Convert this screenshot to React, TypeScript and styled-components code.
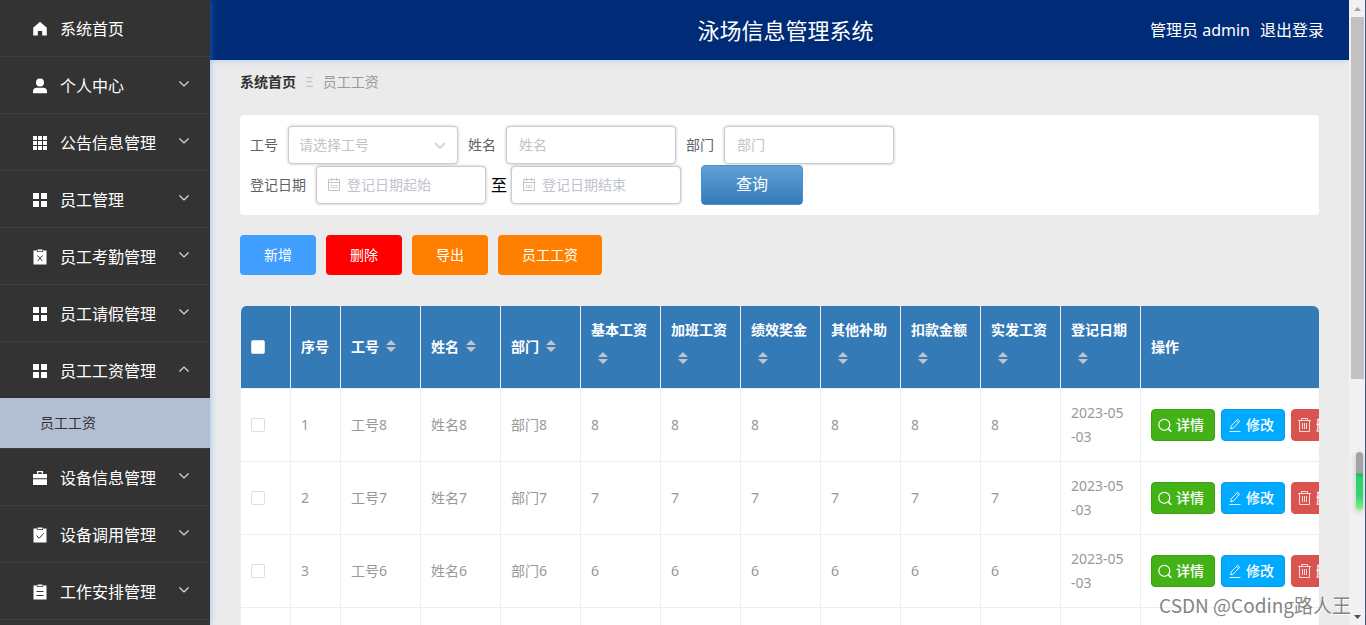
import React from "react";
import styled, { createGlobalStyle } from "styled-components";

const GlobalStyle = createGlobalStyle`
  *, *::before, *::after { box-sizing: border-box; }
  body {
    margin: 0;
    background: #ebebeb;
    color: #333;
    font-family: "Noto Sans", "Noto Sans CJK SC", sans-serif;
    font-size: 14px;
    line-height: 24px;
  }
  button, input, select { font: inherit; }
`;

const Page = styled.div`
  position: relative;
  display: grid;
  grid-template-columns: 210px minmax(0, 1fr) 17px;
  height: 100vh;
  overflow: hidden;
`;

/* ---------- Sidebar ---------- */

const Sidebar = styled.nav`
  position: relative;
  z-index: 1;
  background: #333;
  box-shadow: 1px 0 6px rgba(64, 158, 255, 0.4);
  overflow: hidden;
`;

const MenuList = styled.ul`
  list-style: none;
  margin: 0;
  padding: 0;
`;

const MenuItem = styled.li`
  border-bottom: 1px solid #3d3d3d;
`;

const MenuButton = styled.button`
  display: flex;
  align-items: center;
  gap: 12px;
  width: 100%;
  height: 56px;
  padding: 2px 20px 0 32px;
  border: 0;
  background: transparent;
  color: #fff;
  font-size: 16px;
  text-align: left;
  cursor: pointer;
`;

const MenuLabel = styled.span`
  flex: 1;
`;

const Arrow = styled.svg<{ $open?: boolean }>`
  width: 12px;
  height: 12px;
  margin-bottom: 4px;
  transform: ${(p) => (p.$open ? "rotate(180deg)" : "none")};
`;

const SubLink = styled.a`
  display: block;
  height: 50px;
  padding-left: 40px;
  background: #b3bed3;
  color: #333;
  line-height: 50px;
  text-decoration: none;
`;

/* ---------- Header ---------- */

const Column = styled.div`
  min-width: 0;
  overflow: hidden;
`;

const Header = styled.header`
  display: grid;
  grid-template-columns: 1fr auto 1fr;
  align-items: center;
  height: 60px;
  padding-left: 12px;
  background: #002b77;
  box-shadow: 0 1px 6px rgba(64, 158, 255, 0.3);
  color: #fff;
`;

const Title = styled.h1`
  grid-column: 2;
  margin: 0;
  font-size: 22px;
  font-weight: 400;
  line-height: 60px;
`;

const UserArea = styled.div`
  display: flex;
  justify-content: flex-end;
  gap: 10px;
  padding-right: 25px;
  font-size: 16px;
`;

const Logout = styled.a`
  color: inherit;
  text-decoration: none;
`;

/* ---------- Content ---------- */

const Content = styled.main`
  padding: 0 30px;
`;

const Breadcrumb = styled.nav`
  display: flex;
  gap: 9px;
  height: 45px;
  padding-top: 10px;
  border-bottom: 1px solid #eee;
  margin-bottom: 10px;
  color: #999;
`;

const CrumbHome = styled.a`
  color: #303133;
  font-weight: 700;
  text-decoration: none;
`;

const CrumbMark = styled.span`
  color: #c0c4cc;
`;

const SearchPanel = styled.form`
  padding: 10px;
  border-radius: 4px;
  background: #fff;
`;

const FieldRow = styled.div`
  display: flex;
  align-items: center;
  gap: 10px;
  height: 40px;
`;

const Field = styled.label`
  display: flex;
  align-items: center;
  gap: 10px;
  color: #606266;
`;

const Range = styled.div`
  display: flex;
  align-items: center;
  gap: 4px;
`;

const RangeWord = styled.span`
  width: 17px;
  color: #000;
  font-size: 16px;
  text-align: right;
`;

const Box = styled.span<{ $inset: number }>`
  display: flex;
  align-items: center;
  gap: 6px;
  width: 170px;
  height: 38px;
  padding: 0 10px 0 ${(p) => p.$inset}px;
  border: 1px solid #ccc;
  border-radius: 4px;
  background: #fff;
  box-shadow: 0 0 3px rgba(0, 0, 0, 0.25);
  color: #c0c4cc;
`;

const TextInput = styled.input`
  flex: 1;
  min-width: 0;
  padding: 0;
  border: 0;
  outline: 0;
  background: transparent;
  color: #606266;
  &::placeholder { color: #c0c4cc; opacity: 1; }
`;

const Select = styled.select`
  flex: 1;
  min-width: 0;
  padding: 0;
  border: 0;
  outline: 0;
  appearance: none;
  background: transparent;
  color: #c0c4cc;
`;

const SearchButton = styled.button`
  width: 102px;
  height: 40px;
  margin-left: 10px;
  padding: 0 0 2px;
  border: 1px solid #4a8ec9;
  border-radius: 4px;
  background: linear-gradient(#62a1d8, #337ab7);
  color: #fff;
  font-size: 16px;
`;

const Actions = styled.div`
  display: flex;
  gap: 10px;
  padding: 20px 0 31px;
`;

const ActionButton = styled.button<{ $color: string }>`
  height: 40px;
  padding: 0 24px;
  border: 0;
  border-radius: 4px;
  background: ${(p) => p.$color};
  color: #fff;
`;

/* ---------- Table ---------- */

const TableFrame = styled.div`
  overflow: hidden;
  border-left: 1px solid #eee;
  border-radius: 6px 6px 0 0;
  background: #fff;
`;

const Table = styled.table`
  width: 1180px;
  min-width: 100%;
  table-layout: fixed;
  border-collapse: separate;
  border-spacing: 0;
`;

const HeadCell = styled.th`
  height: 83px;
  padding: 0 10px;
  border-right: 1px solid #eee;
  border-bottom: 1px solid #eee;
  background: #337ab7;
  color: #fff;
  font-weight: 700;
  text-align: left;
  vertical-align: middle;
`;

const HeadContent = styled.div`
  display: flex;
  flex-wrap: wrap;
  align-items: center;
`;

const SortButton = styled.button`
  display: flex;
  align-items: center;
  justify-content: center;
  width: 24px;
  height: 34px;
  padding: 0 0 2px;
  border: 0;
  background: transparent;
`;

const Cell = styled.td`
  height: 73px;
  padding: 0 10px;
  border-right: 1px solid #eee;
  border-bottom: 1px solid #eee;
  color: #999;
  vertical-align: middle;
`;

const Check = styled.input`
  display: block;
  width: 14px;
  height: 14px;
  margin: 0;
  appearance: none;
  border: 1px solid #dcdfe6;
  border-radius: 2px;
  background: #fff;
`;

const RowActions = styled.div`
  display: flex;
  gap: 6px;
`;

const RowButton = styled.button<{ $color: string; $edge: string }>`
  display: flex;
  flex: none;
  align-items: center;
  gap: 4px;
  width: 64px;
  height: 32px;
  padding: 0 0 0 6px;
  border: 1px solid ${(p) => p.$edge};
  border-radius: 4px;
  background: ${(p) => p.$color};
  color: #fff;
  font-weight: 500;
  white-space: nowrap;
`;

/* ---------- Scrollbar and overlays ---------- */

const ScrollTrack = styled.div`
  display: flex;
  flex-direction: column;
  align-items: center;
  border-right: 1px solid #3b5b8c;
  background: #f1f1f1;
`;

const ScrollArrow = styled.svg`
  flex: none;
  width: 17px;
  height: 17px;
`;

const ScrollLane = styled.div`
  flex: 1;
  width: 13px;
`;

const ScrollThumb = styled.div`
  height: 362px;
  background: #c1c1c1;
`;

const Gauge = styled.div`
  position: absolute;
  z-index: 2;
  right: 3px;
  top: 452px;
  width: 7px;
  height: 58px;
  border-radius: 4px;
  background: linear-gradient(#a3a3a3 0 21px, #14b85c 22px, #2bd06f 26px, #35d473 44px, #82f58a 58px);
  box-shadow: 0 2px 6px rgba(0, 0, 0, 0.2);
`;

const Watermark = styled.div`
  position: absolute;
  z-index: 2;
  right: 15px;
  bottom: 6px;
  color: #858585;
  font-family: "Noto Sans CJK SC", sans-serif;
  font-size: 19px;
  font-weight: 400;
  line-height: 28px;
  text-shadow: 1px 1px 0 #fff;
  white-space: nowrap;
`;

/* ---------- Icons ---------- */

const Glyph = styled.svg<{ $size: number }>`
  flex: none;
  display: block;
  width: ${(p) => p.$size}px;
  height: ${(p) => p.$size}px;
`;

const menuShapes: Record<string, React.ReactNode> = {
  home: <path d="M8 .8 1.2 6.8V14.4H5.8V10H10.2V14.4H14.8V6.8Z" />,
  user: (
    <>
      <circle cx="8" cy="4.6" r="4" />
      <path d="M1 15.3v-2.2C1 11 2.500 9.700 4.500 9.700h7c2 0 3.500 1.300 3.500 3.400v2.200z" />
    </>
  ),
  grid9: (
    <path d="M1 1h4v4H1zM6 1h4v4H6zM11 1h4v4h-4zM1 6h4v4H1zM6 6h4v4H6zM11 6h4v4h-4zM1 11h4v4H1zM6 11h4v4H6zM11 11h4v4h-4z" />
  ),
  grid4: <path d="M1 1h6v6H1zM9 1h6v6H9zM1 9h6v6H1zM9 9h6v6H9z" />,
  clipX: (
    <>
      <path d="M1.500 1.500h3.500v1.500h6V1.500h3.500v14h-13zM5.500.5h5V2.200h-5z" />
      <path d="m5.500 6.500 5 5.500m0-5.500-5 5.500" stroke="#333" fill="none" />
    </>
  ),
  clipCheck: (
    <>
      <path d="M1.500 1.500h3.500v1.500h6V1.500h3.500v14h-13zM5.500.5h5V2.200h-5z" />
      <path d="m4.500 8.500 2.700 2.800 4.500-5" stroke="#333" fill="none" />
    </>
  ),
  clipList: (
    <>
      <path d="M1.500 1.500h3.500v1.500h6V1.500h3.500v14h-13zM5.500.5h5V2.200h-5z" />
      <path d="M4.500 7.500h7m-7 4h7" stroke="#333" fill="none" />
    </>
  ),
  briefcase: (
    <path d="M5 1h6v3h4v4.200H1V4h4zM6.200 2.200V4h3.600V2.200zM1 9.200h14V15H1z" fillRule="evenodd" />
  ),
};

const MenuIcon = ({ name }: { name: string }) => (
  <Glyph $size={16} viewBox="0 0 16 16" fill="#fff" aria-hidden="true">
    {menuShapes[name]}
  </Glyph>
);

const CalendarIcon = () => (
  <Glyph $size={14} viewBox="0 0 14 14" fill="none" stroke="#c0c4cc" aria-hidden="true">
    <path d="M1.500 1.500h11v11h-11zM1.500 4.500h11M4.500 0v3M9.500 0v3" />
    <path d="M3.500 7.500h7M3.500 9.500h7" strokeDasharray="2 .5" />
  </Glyph>
);

const DownIcon = () => (
  <Glyph $size={14} viewBox="0 0 14 14" fill="none" stroke="#c0c4cc" strokeWidth="1.200" aria-hidden="true">
    <path d="m2 5 5 5 5-5" />
  </Glyph>
);

const SortIcon = () => (
  <svg width="10" height="12" viewBox="0 0 10 12" fill="#c0c4cc" aria-hidden="true">
    <path d="M5 0 10 5H0zM0 7h10l-5 5z" />
  </svg>
);

const SearchIcon = () => (
  <Glyph $size={14} viewBox="0 0 14 14" fill="none" stroke="#fff" strokeWidth="1.200" aria-hidden="true">
    <circle cx="6.300" cy="6.800" r="5.500" />
    <path d="m10.300 10.900 3 3" strokeWidth="1.500" />
  </Glyph>
);

const EditIcon = () => (
  <Glyph $size={14} viewBox="0 0 14 14" fill="none" stroke="#fff" strokeWidth=".9" aria-hidden="true">
    <path d="M1.500 13.500h11M2.700 10.800l.6-2.900 6.300-6.700 2.100 2-6.300 6.800zM8.400 2.500l2.100 2" />
  </Glyph>
);

const TrashIcon = () => (
  <Glyph $size={14} viewBox="0 0 14 14" fill="none" stroke="#fff" opacity=".8" aria-hidden="true">
    <path d="M0 2.500h13M3.500 2.500v-2h6v2M1.500 2.500v11h10v-11M4.500 5v6M6.500 5v6M8.500 5v6" />
  </Glyph>
);

/* ---------- Data ---------- */

const menu = [
  { icon: "home", label: "系统首页" },
  { icon: "user", label: "个人中心", children: [] },
  { icon: "grid9", label: "公告信息管理", children: [] },
  { icon: "grid4", label: "员工管理", children: [] },
  { icon: "clipX", label: "员工考勤管理", children: [] },
  { icon: "grid4", label: "员工请假管理", children: [] },
  { icon: "grid4", label: "员工工资管理", children: ["员工工资"] },
  { icon: "briefcase", label: "设备信息管理", children: [] },
  { icon: "clipCheck", label: "设备调用管理", children: [] },
  { icon: "clipList", label: "工作安排管理", children: [] },
];

const sortable = [
  "工号", "姓名", "部门", "基本工资", "加班工资",
  "绩效奖金", "其他补助", "扣款金额", "实发工资", "登记日期",
];

const rows = [8, 7, 6, 5];

export default function App() {
  return (
    <>
      <GlobalStyle />
      <Page>
        <Sidebar>
          <MenuList>
            {menu.map((item) => {
              const open = !!item.children && item.children.length > 0;
              return (
                <MenuItem key={item.label}>
                  <MenuButton type="button">
                    <MenuIcon name={item.icon} />
                    <MenuLabel>{item.label}</MenuLabel>
                    {item.children && (
                      <Arrow $open={open} viewBox="0 0 12 12" fill="none" stroke="#ddd" strokeWidth="1.200">
                        <path d="m1.500 3.500 4.500 4.500 4.500-4.500" />
                      </Arrow>
                    )}
                  </MenuButton>
                  {item.children?.map((child) => (
                    <SubLink key={child} href="#">{child}</SubLink>
                  ))}
                </MenuItem>
              );
            })}
          </MenuList>
        </Sidebar>

        <Column>
          <Header>
            <Title>泳场信息管理系统</Title>
            <UserArea>
              <span>管理员 admin</span>
              <Logout href="#">退出登录</Logout>
            </UserArea>
          </Header>

          <Content>
            <Breadcrumb>
              <CrumbHome href="#">系统首页</CrumbHome>
              <CrumbMark>Ξ</CrumbMark>
              <span>员工工资</span>
            </Breadcrumb>

            <SearchPanel>
              <FieldRow>
                <Field>
                  工号
                  <Box $inset={10}>
                    <Select defaultValue="">
                      <option value="">请选择工号</option>
                    </Select>
                    <DownIcon />
                  </Box>
                </Field>
                <Field>
                  姓名
                  <Box $inset={12}><TextInput placeholder="姓名" /></Box>
                </Field>
                <Field>
                  部门
                  <Box $inset={12}><TextInput placeholder="部门" /></Box>
                </Field>
              </FieldRow>
              <FieldRow>
                <Range>
                  <Field>
                    登记日期
                    <Box $inset={10}>
                      <CalendarIcon />
                      <TextInput placeholder="登记日期起始" />
                    </Box>
                  </Field>
                  <RangeWord>至</RangeWord>
                  <Box $inset={10}>
                    <CalendarIcon />
                    <TextInput placeholder="登记日期结束" aria-label="登记日期结束" />
                  </Box>
                </Range>
                <SearchButton type="button">查询</SearchButton>
              </FieldRow>
            </SearchPanel>

            <Actions>
              <ActionButton type="button" $color="#409eff">新增</ActionButton>
              <ActionButton type="button" $color="#ff0000">删除</ActionButton>
              <ActionButton type="button" $color="#ff8000">导出</ActionButton>
              <ActionButton type="button" $color="#ff8000">员工工资</ActionButton>
            </Actions>

            <TableFrame>
              <Table>
                <colgroup>
                  <col width="50" />
                  <col width="50" />
                  {sortable.map((name) => <col key={name} width="80" />)}
                  <col />
                </colgroup>
                <thead>
                  <tr>
                    <HeadCell><Check type="checkbox" aria-label="全选" /></HeadCell>
                    <HeadCell>序号</HeadCell>
                    {sortable.map((name) => (
                      <HeadCell key={name}>
                        <HeadContent>
                          {name}
                          <SortButton type="button" aria-label={name}><SortIcon /></SortButton>
                        </HeadContent>
                      </HeadCell>
                    ))}
                    <HeadCell>操作</HeadCell>
                  </tr>
                </thead>
                <tbody>
                  {rows.map((n, i) => (
                    <tr key={n}>
                      <Cell><Check type="checkbox" aria-label={`选择工号${n}`} /></Cell>
                      <Cell>{i + 1}</Cell>
                      <Cell>工号{n}</Cell>
                      <Cell>姓名{n}</Cell>
                      <Cell>部门{n}</Cell>
                      {sortable.slice(3, 9).map((name) => <Cell key={name}>{n}</Cell>)}
                      <Cell>2023-05<br />-03</Cell>
                      <Cell>
                        <RowActions>
                          <RowButton type="button" $color="#42b216" $edge="#3ba012"><SearchIcon />详情</RowButton>
                          <RowButton type="button" $color="#00aaff" $edge="#0a9cec"><EditIcon />修改</RowButton>
                          <RowButton type="button" $color="#d9534f" $edge="#d9534f"><TrashIcon />删除</RowButton>
                        </RowActions>
                      </Cell>
                    </tr>
                  ))}
                </tbody>
              </Table>
            </TableFrame>
          </Content>
        </Column>

        <ScrollTrack aria-hidden="true">
          <ScrollArrow viewBox="0 0 17 17" fill="#a3a3a3"><path d="m8.500 7 3.500 4H5z" /></ScrollArrow>
          <ScrollLane><ScrollThumb /></ScrollLane>
          <ScrollArrow viewBox="0 0 17 17" fill="#505050"><path d="m8.500 11-3.500-4h7z" /></ScrollArrow>
        </ScrollTrack>

        <Gauge />
        <Watermark>CSDN @Coding路人王</Watermark>
      </Page>
    </>
  );
}
